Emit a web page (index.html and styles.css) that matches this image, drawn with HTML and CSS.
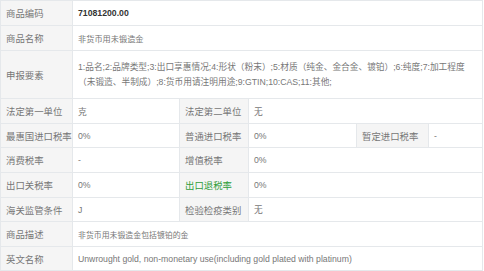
FILE: index.html
```html
<!DOCTYPE html>
<html lang="zh-CN">
<head>
<meta charset="utf-8">
<title>商品编码 71081200.00</title>
<link rel="stylesheet" href="styles.css">
</head>
<body>
<div class="sheet">
  <div class="lbl r1">商品编码</div>
  <div class="val wide r1 code">71081200.00</div>

  <div class="lbl r2">商品名称</div>
  <div class="val wide r2 name">非货币用未锻造金</div>

  <div class="lbl r3">申报要素</div>
  <div class="val wide r3 multi">1:品名;2:品牌类型;3:出口享惠情况;4:形状（粉末）;5:材质（纯金、金合金、镀铂）;6:纯度;7:加工程度（未锻造、半制成）;8:货币用请注明用途;9:GTIN;10:CAS;11:其他;</div>

  <div class="lbl r4">法定第一单位</div>
  <div class="val r4">克</div>
  <div class="lbl r4">法定第二单位</div>
  <div class="val span3 r4">无</div>

  <div class="lbl r5">最惠国进口税率</div>
  <div class="val r5">0%</div>
  <div class="lbl r5">普通进口税率</div>
  <div class="val r5">0%</div>
  <div class="lbl r5">暂定进口税率</div>
  <div class="val r5">-</div>

  <div class="lbl r6">消费税率</div>
  <div class="val r6">-</div>
  <div class="lbl r6">增值税率</div>
  <div class="val span3 r6">0%</div>

  <div class="lbl r7">出口关税率</div>
  <div class="val r7">0%</div>
  <div class="lbl r7 green">出口退税率</div>
  <div class="val span3 r7">0%</div>

  <div class="lbl r8">海关监管条件</div>
  <div class="val r8">J</div>
  <div class="lbl r8">检验检疫类别</div>
  <div class="val span3 r8">无</div>

  <div class="lbl r9">商品描述</div>
  <div class="val wide r9 desc">非货币用未锻造金包括镀铂的金</div>

  <div class="lbl r10">英文名称</div>
  <div class="val wide r10">Unwrought gold, non-monetary use(including gold plated with platinum)</div>
</div>
</body>
</html>
```
FILE: styles.css
```css
html, body {
  margin: 0;
  padding: 0;
  background: #ffffff;
}
body {
  width: 484px;
  height: 271px;
  overflow: hidden;
  font-family: "Liberation Sans", Arial, "Noto Sans CJK SC", sans-serif;
}
.sheet {
  display: grid;
  grid-template-columns: 72px 107px 69px 108px 72px 54px;
  grid-template-rows: 25px 25px 48px 25px 24px 25px 25px 24px 25px 24px;
  width: 482px;
  border-top: 1px solid #e5e8eb;
  border-left: 1px solid #e5e8eb;
  background: #fff;
}
.lbl, .val {
  display: flex;
  align-items: center;
  padding: 0 4px 0 5px;
  border-right: 1px solid #e5e8eb;
  border-bottom: 1px solid #e5e8eb;
  box-sizing: border-box;
  white-space: nowrap;
  overflow: hidden;
}
.lbl {
  background: #f5f5f5;
  font-size: 9.4px;
  color: #777;
}
.val {
  font-size: 8.7px;
  color: #777;
}
.wide { grid-column: span 5; }
.span3 { grid-column: span 3; }
.code {
  font-weight: bold;
  color: #333;
}
.name { font-size: 8.2px; }
.desc { font-size: 7.9px; }
.multi {
  white-space: normal;
  line-height: 14.5px;
  padding-right: 12px;
}
.green { color: #2f9e3a; }
```
